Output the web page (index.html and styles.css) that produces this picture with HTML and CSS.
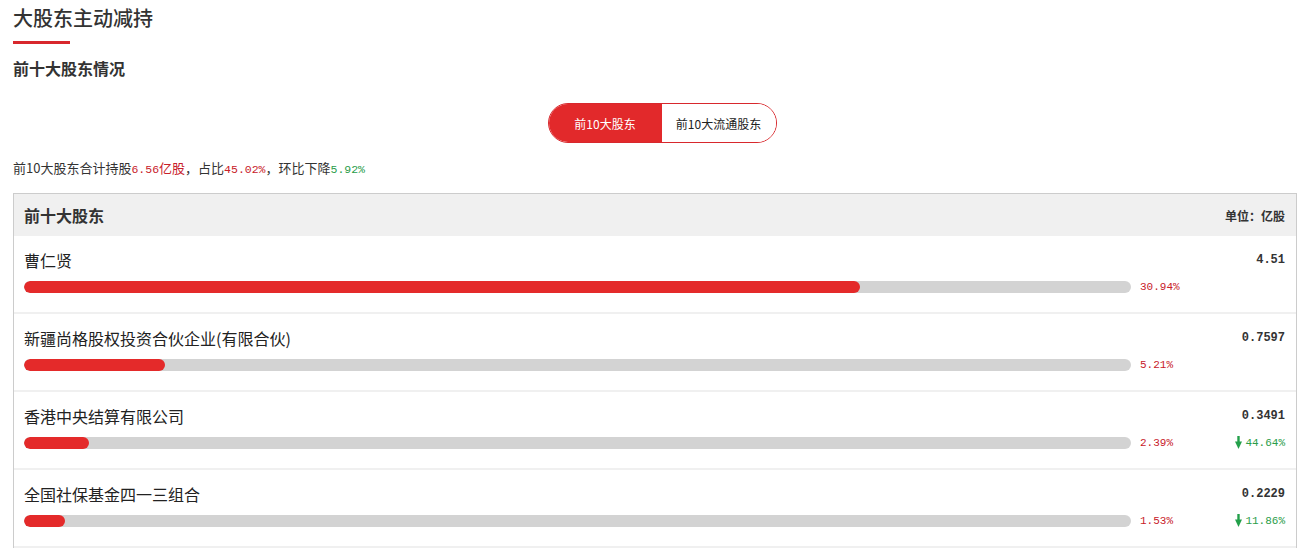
FILE: index.html
```html
<!DOCTYPE html>
<html lang="zh">
<head>
<meta charset="utf-8">
<title>大股东主动减持</title>
<link rel="stylesheet" href="styles.css">
</head>
<body>
<div class="page">
  <h1 class="title">大股东主动减持</h1>
  <div class="title-line"></div>
  <h2 class="subtitle">前十大股东情况</h2>
  <div class="tabs-wrap">
    <div class="tabs">
      <div class="tab active">前10大股东</div>
      <div class="tab">前10大流通股东</div>
    </div>
  </div>
  <p class="summary">前10大股东合计持股<span class="num red">6.56</span><span class="red">亿股</span>，占比<span class="num red">45.02%</span>，环比下降<span class="num green">5.92%</span></p>
  <div class="table">
    <div class="thead">
      <span class="th-title">前十大股东</span>
      <span class="th-unit">单位：亿股</span>
    </div>
    <div class="row">
      <div class="name">曹仁贤</div>
      <div class="value">4.51</div>
      <div class="track"><div class="fill" style="width:75.5%"></div></div>
      <div class="pct">30.94%</div>
      <div class="change"></div>
    </div>
    <div class="row">
      <div class="name">新疆尚格股权投资合伙企业(有限合伙)</div>
      <div class="value">0.7597</div>
      <div class="track"><div class="fill" style="width:12.7%"></div></div>
      <div class="pct">5.21%</div>
      <div class="change"></div>
    </div>
    <div class="row">
      <div class="name">香港中央结算有限公司</div>
      <div class="value">0.3491</div>
      <div class="track"><div class="fill" style="width:5.9%"></div></div>
      <div class="pct">2.39%</div>
      <div class="change"><svg class="arrow" width="7" height="13" viewBox="0 0 7 13"><rect x="2.3" y="0" width="2.4" height="7" fill="#23a04a"/><path d="M0 5.5 L7 5.5 L3.5 13 Z" fill="#23a04a"/></svg>44.64%</div>
    </div>
    <div class="row">
      <div class="name">全国社保基金四一三组合</div>
      <div class="value">0.2229</div>
      <div class="track"><div class="fill" style="width:3.7%"></div></div>
      <div class="pct">1.53%</div>
      <div class="change"><svg class="arrow" width="7" height="13" viewBox="0 0 7 13"><rect x="2.3" y="0" width="2.4" height="7" fill="#23a04a"/><path d="M0 5.5 L7 5.5 L3.5 13 Z" fill="#23a04a"/></svg>11.86%</div>
    </div>
  </div>
</div>
</body>
</html>
```

FILE: styles.css
```css
html, body {
  margin: 0;
  padding: 0;
  background: #fff;
}
body {
  font-family: "Noto Sans CJK SC", "Noto Sans", sans-serif;
  color: #333;
}
.page {
  padding: 0 14px 0 13px;
}
.title {
  margin: 0;
  padding-top: 5px;
  font-size: 20px;
  line-height: 26px;
  font-weight: 500;
  color: #333;
}
.title-line {
  width: 57px;
  height: 3px;
  background: #d8282d;
  margin-top: 10px;
}
.subtitle {
  margin: 12px 0 0;
  font-size: 16px;
  line-height: 24px;
  font-weight: 700;
  color: #333;
}
.tabs-wrap {
  display: flex;
  justify-content: center;
  margin-top: 23px;
  padding-left: 14px;
}
.tabs {
  display: flex;
  height: 40px;
  border: 1px solid #d8282d;
  border-radius: 20px;
  overflow: hidden;
  box-sizing: border-box;
}
.tab {
  display: flex;
  align-items: center;
  justify-content: center;
  font-size: 12px;
  color: #222;
  background: #fff;
}
.tab:first-child { width: 113px; }
.tab:last-child { width: 114px; }
.tab.active {
  background: #e2292b;
  color: #fff;
}
.summary {
  margin: 15px 0 0;
  font-size: 13px;
  line-height: 20px;
  color: #333;
}
.num {
  font-family: "Liberation Mono", monospace;
  font-size: 11.5px;
}
.red { color: #c8202a; }
.green { color: #2a9d4a; }
.table {
  margin-top: 13px;
  border: 1px solid #ccc;
  border-bottom: none;
}
.thead {
  display: flex;
  justify-content: space-between;
  align-items: center;
  height: 42px;
  padding: 0 11px 0 10px;
  background: #f0f0f0;
}
.th-title {
  font-size: 16px;
  font-weight: 700;
  color: #333;
}
.th-unit {
  font-size: 12px;
  font-weight: 700;
  color: #333;
}
.row {
  display: grid;
  grid-template-columns: 1fr 59px 95px;
  grid-template-rows: 20px 13px;
  row-gap: 10px;
  align-items: center;
  padding: 14px 11px 19px 10px;
  border-bottom: 2px solid #f0f0f0;
}
.name {
  grid-column: 1 / 3;
  font-size: 16px;
  line-height: 20px;
  color: #222;
}
.value {
  grid-column: 3;
  text-align: right;
  font-family: "Liberation Mono", monospace;
  font-size: 12px;
  font-weight: 700;
  color: #333;
}
.track {
  height: 12px;
  border-radius: 6px;
  background: #d3d3d3;
  overflow: hidden;
}
.fill {
  height: 100%;
  border-radius: 6px;
  background: #e42a2a;
}
.pct {
  padding-left: 9px;
  font-family: "Liberation Mono", monospace;
  font-size: 11px;
  color: #c8202a;
}
.change {
  display: flex;
  justify-content: flex-end;
  align-items: center;
  gap: 3px;
  font-family: "Liberation Mono", monospace;
  font-size: 11px;
  color: #2a9d4a;
}
.arrow { display: block; }
```
